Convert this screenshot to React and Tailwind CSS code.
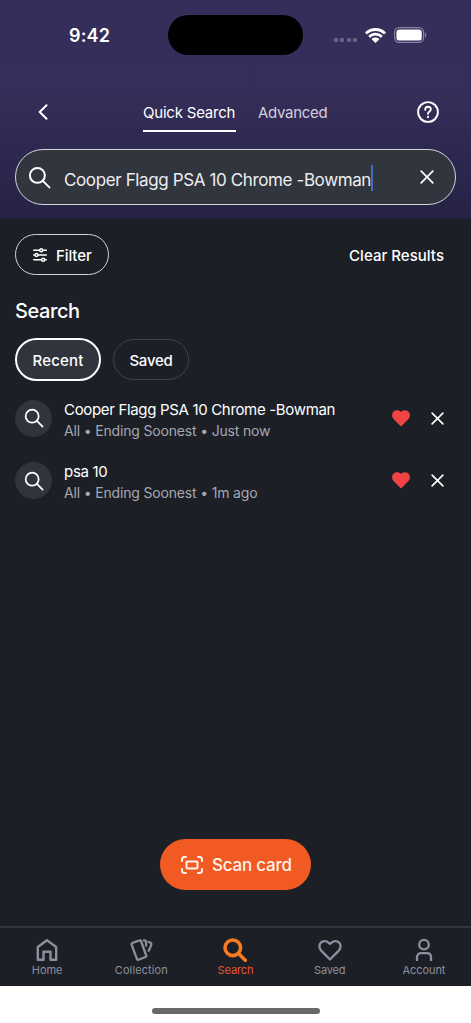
import { useState } from 'react'

const initialSearches = [
  { id: 1, title: 'Cooper Flagg PSA 10 Chrome -Bowman', time: 'Just now', tracking: 'tracking-[-0.33px]' },
  { id: 2, title: 'psa 10', time: '1m ago', tracking: 'tracking-[-0.3px]' },
]

function SearchIcon({ className, strokeWidth = 2.1 }) {
  return (
    <svg viewBox="0 0 24 24" fill="none" stroke="currentColor" strokeWidth={strokeWidth} strokeLinecap="round" className={className}>
      <circle cx="9.8" cy="9.8" r="7.8" />
      <path d="M15.5 15.5 22.3 22.3" />
    </svg>
  )
}

function CloseIcon({ className }) {
  return (
    <svg viewBox="0 0 14 14" fill="none" stroke="currentColor" strokeWidth="1.7" strokeLinecap="round" className={className}>
      <path d="M1.2 1.2 12.8 12.8M12.8 1.2 1.2 12.8" />
    </svg>
  )
}

function HeartIcon({ className }) {
  return (
    <svg viewBox="0 0 18 17" fill="currentColor" className={className}>
      <path d="M9 16.4 1.5 8.9C-.4 6.9-.3 3.6 1.5 1.8 3.5-.1 6.7 0 8.5 1.4L9 1.8l.5-.4c1.8-1.4 5-1.500 7 .4 1.8 1.8 1.9 5.1 0 7.1z" />
    </svg>
  )
}

function StatusBar() {
  return (
    <div className="flex h-[70px] items-center pl-[69px]">
      <span className="w-[99px] font-['Inter',sans-serif] text-[18px] font-semibold tracking-[0.15px]">9:42</span>
      <div className="h-10 w-[135px] rounded-full bg-black" />
      <div className="ml-[31px] flex w-[93px] items-center">
        <div className="mt-[9px] flex gap-[2.4px]">
          {[0, 1, 2, 3].map((dot) => (
            <span key={dot} className="size-1 rounded-[1px] bg-[#686386]" />
          ))}
        </div>
        <svg viewBox="0 0 21 15" fill="currentColor" className="ml-2 h-[15px] w-[21px] shrink-0">
          <path d="M10.5 0C6.600 0 3 1.500.4 4L0 4.500 2 6.500l.5-.4C4.600 4 7.400 2.900 10.500 2.900s5.900 1.100 8 3.200l.5.4 2-2-.4-.5C18 1.500 14.400 0 10.500 0z" />
          <path d="M10.500 4.800c-2.600 0-5 1-6.800 2.700l-.4.400 2 2 .400-.400c1.300-1.200 3-1.900 4.800-1.900s3.500.700 4.800 1.900l.4.400 2-2-.4-.4c-1.800-1.700-4.200-2.700-6.800-2.700z" />
          <path d="M10.500 9.500c-1.400 0-2.600.500-3.500 1.300l-.4.500 3.900 3.700 3.900-3.700-.4-.5c-.9-.8-2.100-1.300-3.500-1.300z" />
        </svg>
        <svg viewBox="0 0 33 16" className="ml-2 h-4 w-[33px] shrink-0">
          <rect x=".6" y=".6" width="29" height="14.800" rx="4.600" fill="none" stroke="#8883a2" strokeWidth="1.200" />
          <rect x="2.400" y="2.400" width="25.400" height="11.200" rx="3.200" fill="white" />
          <path d="M31 5.500c1.800.5 1.800 4.500 0 5z" fill="#8883a2" />
        </svg>
      </div>
    </div>
  )
}

function HistoryRow({ item, onRemove }) {
  const [liked, setLiked] = useState(true)

  return (
    <li className="flex h-[62.7px] items-center">
      <div className="flex size-[37px] shrink-0 items-center justify-center rounded-full bg-[#31343c]">
        <SearchIcon className="size-5" />
      </div>
      <div className="ml-3 min-w-0 flex-1 pt-[3px] whitespace-nowrap">
        <p className={`text-[15px] leading-[22px] ${item.tracking}`}>{item.title}</p>
        <p className="text-[14px] leading-5 tracking-[-0.17px] text-[#a5a7b2]">All • Ending Soonest • {item.time}</p>
      </div>
      <button onClick={() => setLiked(!liked)} aria-label="Save search">
        <HeartIcon className={`h-[17px] w-[18px] ${liked ? 'text-[#f04444]' : 'text-[#8d8f9d]'}`} />
      </button>
      <button onClick={() => onRemove(item.id)} aria-label="Remove search" className="ml-[21px]">
        <CloseIcon className="size-[13px]" />
      </button>
    </li>
  )
}

function HomeIcon() {
  return (
    <svg viewBox="0 0 24 24" fill="none" stroke="currentColor" strokeWidth="2.4" strokeLinejoin="round" className="size-6">
      <path d="M2.800 21.800V9L12 2.200 21.200 9v12.800H15.500v-8h-7v8z" />
    </svg>
  )
}

function CollectionIcon() {
  return (
    <svg viewBox="0 0 24 24" fill="none" stroke="currentColor" strokeWidth="2.3" strokeLinecap="round" strokeLinejoin="round" className="size-6">
      <path d="M2.600 6.600Q2.200 5.400 3.300 5L10.600 2.400Q11.600 2 12 3l5.200 14.500Q17.600 18.600 16.600 19L9.500 21.800Q8.500 22.200 8 21.200z" />
      <path d="M14.800 2.400c1.700-.1 2.300.4 2.300 1.900v3.500M19.800 4c2.600.8 3.100 1.600 2.200 3.700l-2.300 5" />
    </svg>
  )
}

function SavedIcon() {
  return (
    <svg viewBox="0 0 24 24" fill="none" stroke="currentColor" strokeWidth="2.3" strokeLinejoin="round" className="size-6">
      <path d="M12 21.500 3.200 12.600C.8 10 1 6.500 2.900 4.600c2-2 5.600-1.900 7.500 0L12 6l1.600-1.400c1.900-1.900 5.500-2 7.500 0 1.900 1.900 2.100 5.400-.3 8z" />
    </svg>
  )
}

function AccountIcon() {
  return (
    <svg viewBox="0 0 24 24" fill="none" stroke="currentColor" strokeWidth="2.3" className="size-6">
      <circle cx="12" cy="6.600" r="4.800" />
      <path d="M5 23v-3.500c0-2.800 1.600-4.300 4.200-4.300h5.600c2.600 0 4.200 1.500 4.200 4.300V23" />
    </svg>
  )
}

const navItems = [
  { label: 'Home', icon: <HomeIcon />, tracking: 'tracking-[-0.05px]' },
  { label: 'Collection', icon: <CollectionIcon />, tracking: 'tracking-[0.1px]' },
  { label: 'Search', icon: <SearchIcon className="size-6 text-[#f97a1f]" strokeWidth={3.6} />, tracking: 'tracking-[-0.1px]' },
  { label: 'Saved', icon: <SavedIcon />, tracking: 'tracking-[-0.2px]' },
  { label: 'Account', icon: <AccountIcon />, tracking: 'tracking-[-0.05px]' },
]

export default function App() {
  const [query, setQuery] = useState('Cooper Flagg PSA 10 Chrome -Bowman')
  const [searches, setSearches] = useState(initialSearches)
  const [tab, setTab] = useState('Recent')

  const removeSearch = (id) => setSearches(searches.filter((item) => item.id !== id))

  return (
    <div className="flex h-[1023px] w-full flex-col overflow-hidden bg-[#1c1f26] font-['Inter',sans-serif] text-white">
      {/* Header */}
      <header className="h-[219px] shrink-0 bg-linear-to-b from-[#352e5a] from-40% to-[#262245]">
        <StatusBar />
        <div className="flex h-[79px] items-center pr-8 pl-[38px]">
          <button aria-label="Back" className="mt-1 w-[105px]">
            <svg viewBox="0 0 10 16" fill="none" stroke="currentColor" strokeWidth="2" strokeLinecap="round" strokeLinejoin="round" className="h-4 w-2.5">
              <path d="M8.500 1.300 1.700 8l6.800 6.700" />
            </svg>
          </button>
          <div className="mt-[8px] flex flex-1 items-start gap-[22px] text-[15px] whitespace-nowrap">
            <button className="flex h-9 w-[93px] items-center border-b-2 border-white pt-0.5 tracking-[-0.21px]">Quick Search</button>
            <button className="flex h-[34px] w-[70px] items-center pt-0.5 tracking-[-0.3px] text-[#d3d0df]">Advanced</button>
          </div>
          <button aria-label="Help">
            <svg viewBox="0 0 22 22" fill="none" stroke="currentColor" strokeWidth="1.900" strokeLinecap="round" className="mt-1 size-[22px]">
              <circle cx="11" cy="11" r="9.900" />
              <path d="M8.200 8.800c0-4 5.700-3.800 5.700-.6 0 2.300-2.900 2.300-2.900 4.500" />
              <path d="M11 15.900v.2" strokeWidth="2.200" />
            </svg>
          </button>
        </div>
        <div className="mx-[15px] flex h-14 items-center rounded-full border-[1.5px] border-[#d5d5de] bg-[#31353d] pr-[21px] pl-3">
          <SearchIcon className="size-[23px] shrink-0" />
          <div className="mt-[2px] ml-[13px] flex flex-1 items-center whitespace-nowrap">
            <span className="pt-[5px] text-[17px] tracking-[-0.38px] text-[#eeeef1]">{query}</span>
            <span className="h-[26px] w-0.5 bg-[#4668c8]" />
          </div>
          <button onClick={() => setQuery('')} aria-label="Clear">
            <CloseIcon className="size-3.5" />
          </button>
        </div>
      </header>

      <main className="flex flex-1 flex-col px-[15px]">
        {/* Filters */}
        <div className="mt-[15px] flex items-center justify-between pr-3 text-[15px] font-medium">
          <button className="flex h-[41px] w-[94px] items-center rounded-full border-[1.5px] border-[#d4d4d8] pl-[17px]">
            <svg viewBox="0 0 14 14" fill="none" stroke="currentColor" strokeWidth="1.400" strokeLinecap="round" className="mr-[9px] size-3.5">
              <path d="M.7 2.200h5.800M10 2.200h3.300M.7 7h1M5.300 7h8M.7 11.800h7.800M12 11.800h1.300" />
              <circle cx="8.200" cy="2.200" r="1.500" />
              <circle cx="3.500" cy="7" r="1.500" />
              <circle cx="10.200" cy="11.800" r="1.500" />
            </svg>
            <span className="pt-[3px] tracking-[-0.1px]">Filter</span>
          </button>
          <button className="pt-[3px] tracking-[0.03px]">Clear Results</button>
        </div>

        <h2 className="mt-[22px] text-[20px] leading-[28px] font-medium tracking-[-0.4px]">Search</h2>

        <div className="mt-[13px] flex items-center gap-3 text-[15px] font-medium">
          <button
            onClick={() => setTab('Recent')}
            className={`h-[43px] w-[86px] rounded-full pt-[3px] tracking-[0.15px] ${tab === 'Recent' ? 'border-2 border-white bg-[#31343c]' : 'border border-[#42444d]'}`}
          >
            Recent
          </button>
          <button
            onClick={() => setTab('Saved')}
            className={`h-[41px] w-[76px] rounded-full pt-[3px] tracking-[-0.25px] ${tab === 'Saved' ? 'border-2 border-white bg-[#31343c]' : 'border border-[#42444d]'}`}
          >
            Saved
          </button>
        </div>

        {/* Search history */}
        <ul className="mt-[5.700px] pr-3">
          {searches.map((item) => (
            <HistoryRow key={item.id} item={item} onRemove={removeSearch} />
          ))}
        </ul>

        <button className="mt-auto mb-9 flex h-[51px] w-[151px] items-center self-center rounded-full bg-[#f15a22] pl-[21px] text-[17px] font-medium whitespace-nowrap text-[#fff3e9]">
          <svg viewBox="0 0 22 18" fill="none" stroke="currentColor" strokeWidth="2" strokeLinecap="round" strokeLinejoin="round" className="mr-[9px] h-[18px] w-[22px]">
            <path d="M1 5V3.500Q1 1 3.500 1H5M17 1h1.500Q21 1 21 3.500V5M21 13v1.500q0 2.500-2.500 2.500H17M5 17H3.500Q1 17 1 14.500V13" />
            <rect x="5.500" y="5.500" width="11" height="7" rx="1" />
          </svg>
          <span className="pt-0.5 tracking-[-0.22px]">Scan card</span>
        </button>
      </main>

      {/* Bottom navigation */}
      <nav className="grid h-[60px] shrink-0 grid-cols-5 border-t-2 border-[#34363f]">
        {navItems.map((item) => (
          <button
            key={item.label}
            className={`flex flex-col items-center pt-[10px] text-[11px] ${item.label === 'Search' ? 'text-[#e8562c]' : 'text-[#8d8f9f]'}`}
          >
            {item.icon}
            <span className={`leading-4 ${item.tracking}`}>{item.label}</span>
          </button>
        ))}
      </nav>
      <div className="flex h-[37px] shrink-0 justify-center bg-white pt-[22px]">
        <div className="h-1.5 w-[168px] rounded-full bg-[#686868]" />
      </div>
    </div>
  )
}
